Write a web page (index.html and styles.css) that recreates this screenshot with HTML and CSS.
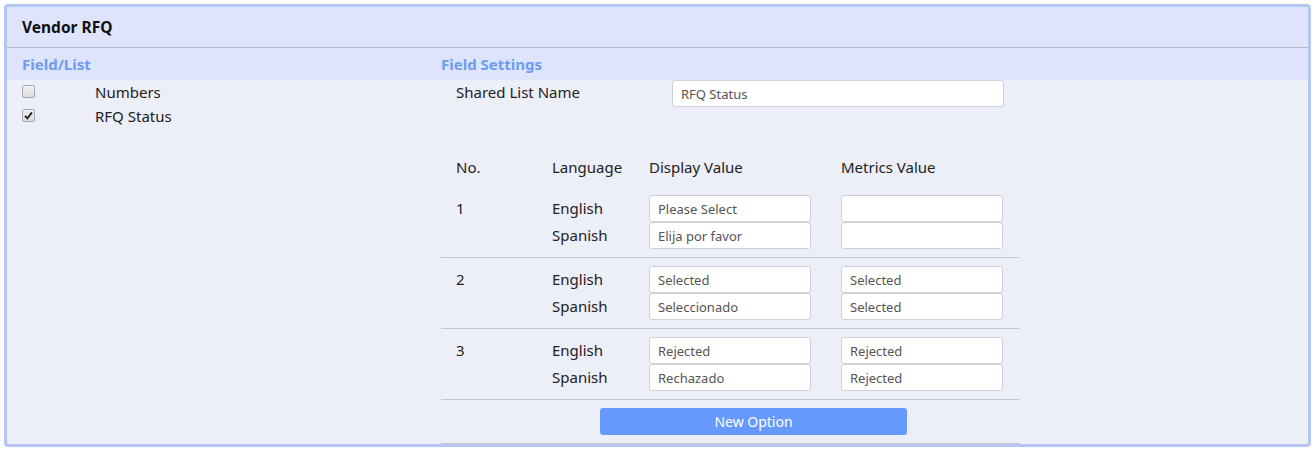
FILE: index.html
```html
<!DOCTYPE html>
<html lang="en">

<head>
    <meta charset="UTF-8">
    <meta name="viewport" content="width=device-width, initial-scale=1.0">
    <title>Vendor RFQ</title>
    <link rel="stylesheet" href="styles.css">
</head>

<body>
    <div class="panel">
        <div class="panel-head">Vendor RFQ</div>
        <div class="cols">
            <!-- left: list of fields -->
            <div class="col-left">
                <div class="col-title">Field/List</div>
                <div class="field-row">
                    <span class="check"></span>
                    <span class="field-name">Numbers</span>
                </div>
                <div class="field-row">
                    <span class="check on">
                        <svg width="9" height="9" viewBox="0 0 9 9"><path d="M1 4.8 L3.4 7.4 L8 1.4" fill="none" stroke="#222" stroke-width="1.8"/></svg>
                    </span>
                    <span class="field-name">RFQ Status</span>
                </div>
            </div>

            <!-- right: settings -->
            <div class="col-right">
                <div class="col-title">Field Settings</div>
                <div class="shared">
                    <span class="lbl">Shared List Name</span>
                    <input class="inp wide" type="text" value="RFQ Status">
                </div>

                <div class="opts">
                    <div class="opt-head">
                        <span>No.</span>
                        <span>Language</span>
                        <span>Display Value</span>
                        <span>Metrics Value</span>
                    </div>

                    <div class="opt first">
                        <span class="lbl">1</span>
                        <span class="lbl">English</span>
                        <input class="inp" type="text" value="Please Select">
                        <input class="inp" type="text" value="">
                        <span></span>
                        <span class="lbl">Spanish</span>
                        <input class="inp" type="text" value="Elija por favor">
                        <input class="inp" type="text" value="">
                    </div>

                    <div class="opt">
                        <span class="lbl">2</span>
                        <span class="lbl">English</span>
                        <input class="inp" type="text" value="Selected">
                        <input class="inp" type="text" value="Selected">
                        <span></span>
                        <span class="lbl">Spanish</span>
                        <input class="inp" type="text" value="Seleccionado">
                        <input class="inp" type="text" value="Selected">
                    </div>

                    <div class="opt">
                        <span class="lbl">3</span>
                        <span class="lbl">English</span>
                        <input class="inp" type="text" value="Rejected">
                        <input class="inp" type="text" value="Rejected">
                        <span></span>
                        <span class="lbl">Spanish</span>
                        <input class="inp" type="text" value="Rechazado">
                        <input class="inp" type="text" value="Rejected">
                    </div>

                    <div class="opt-foot">
                        <a href="javascript:;" class="btn">New Option</a>
                    </div>
                </div>
            </div>
        </div>
    </div>
</body>

</html>
```

FILE: styles.css
```css
html,
body {
    background-color: #fff;
}

body {
    margin: 4px;
    font-family: "Noto Sans", "Open Sans", sans-serif;
    font-size: 14px;
    color: #222;
}

.panel {
    border: 3px solid #b6c6f2;
    border-radius: 4px;
    background-color: #eceef8;
}

.panel-head {
    height: 40px;
    line-height: 40px;
    padding-left: 15px;
    background-color: #dde4fc;
    border-bottom: 1px solid #b4b8c6;
    font-weight: bold;
    font-size: 15.5px;
    color: #111;
}

.cols {
    display: flex;
}

.col-left {
    width: 434px;
}

.col-right {
    flex: 1;
}

.col-title {
    height: 32px;
    line-height: 32px;
    background-color: #dde4fc;
    color: #6d9cf0;
    font-weight: bold;
    font-size: 15px;
}

.col-left .col-title {
    padding-left: 15px;
}

.field-row {
    display: flex;
    align-items: center;
    height: 24px;
    padding-left: 15px;
}

.check {
    width: 11px;
    height: 11px;
    border: 1px solid #a9a9a9;
    border-radius: 2px;
    background: linear-gradient(#f2f2f2, #dcdcdc);
    display: flex;
    align-items: center;
    justify-content: center;
    margin-top: -1px;
}

.field-name {
    margin-left: 60px;
    font-size: 15px;
}

.lbl {
    font-size: 15px;
    line-height: 26px;
}

.shared {
    display: flex;
    height: 27px;
    padding-left: 15px;
}

.shared .lbl {
    width: 216px;
    line-height: 25px;
}

.inp {
    box-sizing: border-box;
    height: 27px;
    border: 1px solid #cfd1d6;
    border-radius: 3px;
    background-color: #fff;
    padding: 0 8px;
    font-family: "Noto Sans", "Open Sans", sans-serif;
    font-size: 13px;
    color: #555;
    outline: none;
}

.inp.wide {
    width: 332px;
}

.opts {
    width: 578px;
    margin-top: 46px;
}

.opt-head,
.opt {
    display: grid;
    grid-template-columns: 96px 97px 192px 162px;
    padding-left: 15px;
}

.opt-head span {
    font-size: 15px;
    line-height: 28px;
}

.opt {
    padding-top: 8px;
    padding-bottom: 8px;
    border-bottom: 1px solid #c4c6cc;
}

.opt.first {
    padding-top: 14px;
}

.opt .inp {
    width: 162px;
}

.opt-foot {
    padding: 8px 0;
    border-bottom: 1px solid #c4c6cc;
}

.btn {
    display: block;
    width: 307px;
    height: 27px;
    line-height: 27px;
    margin-left: 159px;
    background-color: #6699fd;
    border-radius: 3px;
    color: #fff;
    text-align: center;
    text-decoration: none;
    font-size: 14px;
}
```
